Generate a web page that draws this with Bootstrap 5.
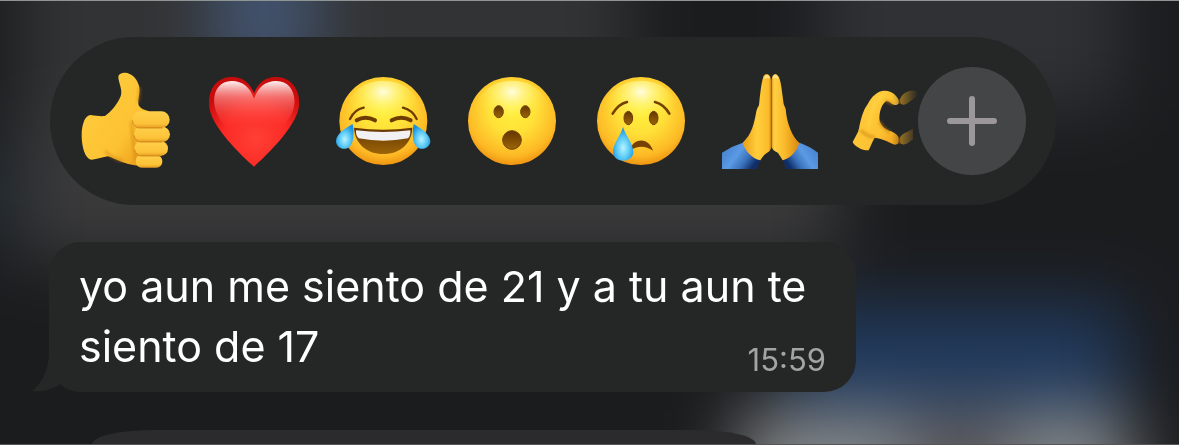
<!DOCTYPE html>
<html lang="es">
<head>
<meta charset="utf-8">
<meta name="viewport" content="width=device-width, initial-scale=1">
<title>Reacciones</title>
<link href="https://cdn.jsdelivr.net/npm/bootstrap@5.3.0/dist/css/bootstrap.min.css" rel="stylesheet">
<style>
  :root { --panel: #252726; }
  body {
    font-family: Inter, "Liberation Sans", sans-serif;
    color: #fff;
    background-color: #1b1c1e;
  }
  .screen {
    border-top: 1px solid #8f9494;
    border-bottom: 1px solid #555657;
    padding: 36px 48px 0 50px;
  }
  .backdrop { inset: 0; z-index: -1; }
  .reactions { background: var(--panel); border-radius: 84px; max-width: 1006px; padding: 30px 30px 30px 27px; }
  .reaction-strip {
    gap: 33px;
    min-width: 0;
    -webkit-mask-image: linear-gradient(to left, #0000 0, #000 26px);
    mask-image: linear-gradient(to left, #0000 0, #000 26px);
  }
  .reaction { flex: 0 0 96px; width: 96px; height: 108px; background: none; }
  .reaction svg { width: 96px; height: 96px; overflow: visible; display: block; }
  .more { flex: 0 0 108px; height: 108px; background: #444547; }
  .bubble {
    background: var(--panel);
    border-radius: 32px;
    max-width: 807px;
    margin: 37px 0 38px -1px;
    padding: 14px 30px 16px;
  }
  .bubble p { font-size: 43px; line-height: 60px; }
  .bubble time { font-size: 31px; line-height: 32px; color: #a3a4a4; }
  .tail { left: -17px; bottom: 0; width: 48px; height: 56px; fill: var(--panel); }
  .menu { background: #2b2b2d; height: 14px; max-width: 664px; margin-left: 42px; border-radius: 64px 64px 0 0 / 14px 14px 0 0; }
</style>
</head>
<body>
<svg width="0" height="0" class="position-absolute" aria-hidden="true">
  <defs>
    <radialGradient id="face" cx=".5" cy=".38" r=".66"><stop offset="0" stop-color="#fff03b"/><stop offset=".4" stop-color="#ffe038"/><stop offset=".78" stop-color="#fdb925"/><stop offset="1" stop-color="#ea870b"/></radialGradient>
    <radialGradient id="shine" cx=".5" cy=".2" r=".55"><stop offset="0" stop-color="#fffde0"/><stop offset=".45" stop-color="#fff780" stop-opacity=".6"/><stop offset="1" stop-color="#ffe62e" stop-opacity="0"/></radialGradient>
    <linearGradient id="skin" x2="1" y2="1"><stop offset="0" stop-color="#ffcf3e"/><stop offset=".65" stop-color="#fdc233"/><stop offset="1" stop-color="#e99514"/></linearGradient>
    <linearGradient id="finger" x2="0" y2="1"><stop offset="0" stop-color="#ffd04a"/><stop offset=".75" stop-color="#fcc238"/><stop offset="1" stop-color="#e59a20"/></linearGradient>
    <linearGradient id="brown" x2="0" y2="1"><stop offset="0" stop-color="#643500"/><stop offset="1" stop-color="#9c6508"/></linearGradient>
    <radialGradient id="tear" cx=".5" cy=".62" r=".6"><stop offset="0" stop-color="#b8f3ff"/><stop offset=".5" stop-color="#5ccbf7"/><stop offset="1" stop-color="#168fdd"/></radialGradient>
    <radialGradient id="red" cx=".52" cy=".68" r=".65"><stop offset="0" stop-color="#ff4035"/><stop offset=".55" stop-color="#fb2a25"/><stop offset="1" stop-color="#c80b0b"/></radialGradient>
    <linearGradient id="gloss" x2="0" y2="1"><stop offset="0" stop-color="#fff" stop-opacity=".95"/><stop offset=".22" stop-color="#ff9b98" stop-opacity=".65"/><stop offset=".6" stop-color="#ff3830" stop-opacity=".2"/><stop offset=".85" stop-color="#ff3830" stop-opacity="0"/></linearGradient>
    <linearGradient id="palmL" x2="1" y2="0"><stop offset="0" stop-color="#e99c16"/><stop offset=".5" stop-color="#ffce3c"/><stop offset=".9" stop-color="#fbbb2b"/><stop offset="1" stop-color="#d58c17"/></linearGradient>
    <linearGradient id="palmR" x1="1" x2="0" y2="0"><stop offset="0" stop-color="#d98810"/><stop offset=".5" stop-color="#f9b829"/><stop offset=".9" stop-color="#ffd044"/><stop offset="1" stop-color="#d99319"/></linearGradient>
    <linearGradient id="sleeveL" x2="1" y2=".5"><stop offset="0" stop-color="#3d79c9"/><stop offset=".5" stop-color="#5b9ae4"/><stop offset=".75" stop-color="#3c73bd"/><stop offset="1" stop-color="#102f68"/></linearGradient>
    <linearGradient id="sleeveR" x1="1" x2="0" y2=".5"><stop offset="0" stop-color="#3d79c9"/><stop offset=".5" stop-color="#5b9ae4"/><stop offset=".75" stop-color="#3c73bd"/><stop offset="1" stop-color="#102f68"/></linearGradient>
    <filter id="soft" x="-20%" y="-20%" width="140%" height="140%"><feGaussianBlur stdDeviation="4"/></filter>
    <filter id="frost" filterUnits="userSpaceOnUse" x="-150" y="-200" width="1480" height="850" color-interpolation-filters="sRGB"><feGaussianBlur stdDeviation="34"/></filter>
  </defs>
</svg>

<svg class="backdrop position-fixed w-100 h-100" viewBox="0 0 1179 445" preserveAspectRatio="none" aria-hidden="true">
  <g filter="url(#frost)">
    <rect x="-150" y="-200" width="1480" height="850" fill="#1b1c1e"/>
    <rect x="20" y="-200" width="610" height="310" fill="#323334"/>
    <rect x="820" y="-200" width="300" height="310" fill="#303134"/>
    <rect x="212" y="-200" width="105" height="290" fill="#42536e"/>
    <rect x="-150" y="150" width="160" height="90" fill="#1c2830"/>
    <rect x="20" y="110" width="820" height="150" fill="#3a3a3b"/>
    <rect x="790" y="305" width="335" height="110" fill="#20395c"/>
    <rect x="740" y="410" width="390" height="240" fill="#858787"/>
    <rect x="910" y="420" width="100" height="230" fill="#5a5455"/>
  </g>
</svg>

<main class="screen min-vh-100 d-flex flex-column overflow-hidden">
  <div class="reactions d-flex w-100" role="toolbar" aria-label="Reacciones">
    <div class="reaction-strip d-flex flex-grow-1 overflow-hidden">
      <button type="button" class="reaction border-0 p-0 d-flex align-items-center" aria-label="Me gusta">
        <svg viewBox="111 69 288 288" aria-hidden="true">
          <path fill="url(#skin)" d="M152 195C168 198 184 199 195 198C212 186 231 166 242 139C249 119 235 97 235 80C237 70 250 67 262 69C281 75 294 91 298 112C301 133 292 150 296 166C302 177 315 180 327 184L324 350C298 348 270 345 246 336C229 330 215 322 204 319C190 321 171 328 155 329C136 328 125 291 125 255C125 224 135 195 152 195Z"/>
          <path fill="none" stroke="#c87b0d" stroke-width="7" opacity=".55" filter="url(#soft)" d="M274 215Q279 270 288 338M196 303Q214 326 249 333M298 112Q299 134 294 157"/>
          <rect x="287" y="315" width="80" height="38" rx="18" fill="url(#finger)"/>
          <rect x="283" y="273" width="101" height="45" rx="22" fill="url(#finger)"/>
          <rect x="282" y="230" width="108" height="46" rx="23" fill="url(#finger)"/>
          <rect x="277" y="184" width="112" height="50" rx="25" fill="url(#finger)"/>
          <path fill="none" stroke="#b8700f" stroke-width="3" stroke-linecap="round" opacity=".6" d="M277 212Q281 233 299 234H366M282 257Q286 275 302 276H366M284 300Q289 317 302 318H360"/>
        </svg>
      </button>
      <button type="button" class="reaction border-0 p-0 d-flex align-items-center" aria-label="Me encanta">
        <svg viewBox="48 69 288 288" aria-hidden="true">
          <path fill="url(#red)" d="M192 350C153 315 89 253 65 198C43 142 67 82 124 81C158 80 181 100 192 130C203 100 226 80 260 81C316 82 344 144 318 199C294 253 231 315 192 350Z"/>
          <path fill="url(#gloss)" d="M192 315C145 275 95 230 78 184C62 137 81 93 125 93C158 93 180 112 192 146C204 112 226 93 259 93C303 93 324 137 308 184C290 230 239 275 192 315Z"/>
        </svg>
      </button>
      <button type="button" class="reaction border-0 p-0 d-flex align-items-center" aria-label="Me divierte">
        <svg viewBox="45 69 288 288" aria-hidden="true">
          <circle cx="190" cy="213" r="132" fill="url(#face)"/>
          <ellipse cx="190" cy="178" rx="108" ry="86" fill="url(#shine)"/>
          <g fill="none" stroke="#6e3b00" stroke-linecap="round">
            <path stroke-width="7" d="M90 207Q104 178 131 173M249 173Q277 180 290 207"/>
            <path stroke-width="12" d="M110 211Q136 196 165 211M215 211Q244 196 272 211"/>
          </g>
          <path fill="url(#brown)" d="M102 233Q190 245 277 233C276 279 241 312 190 312C139 312 104 279 102 233Z"/>
          <path fill="#f1f0f2" d="M108 241Q190 251 271 241Q272 258 264 265Q190 279 116 265Q107 257 108 241Z"/>
          <path fill="url(#tear)" d="M98 222C103 246 102 280 88 291C71 304 48 292 48 273C49 250 79 234 98 222Z"/>
          <path fill="url(#tear)" d="M281 222C276 246 277 280 291 291C308 304 331 292 331 273C329 250 299 234 281 222Z"/>
        </svg>
      </button>
      <button type="button" class="reaction border-0 p-0 d-flex align-items-center" aria-label="Me asombra">
        <svg viewBox="42 69 288 288" aria-hidden="true">
          <circle cx="186" cy="213" r="132" fill="url(#face)"/>
          <ellipse cx="186" cy="178" rx="108" ry="86" fill="url(#shine)"/>
          <g fill="url(#brown)" stroke="#70420a" stroke-width="3">
            <ellipse cx="146" cy="185" rx="14" ry="18"/><ellipse cx="226" cy="185" rx="14" ry="18"/><circle cx="186" cy="270" r="28"/>
          </g>
        </svg>
      </button>
      <button type="button" class="reaction border-0 p-0 d-flex align-items-center" aria-label="Me entristece">
        <svg viewBox="39 69 288 288" aria-hidden="true">
          <circle cx="183" cy="213" r="132" fill="url(#face)"/>
          <ellipse cx="183" cy="178" rx="108" ry="86" fill="url(#shine)"/>
          <path fill="none" stroke="#754100" stroke-width="8" stroke-linecap="round" d="M98 191Q115 162 141 156M225 156Q252 163 268 191"/>
          <g fill="url(#brown)" stroke="#6f3e05" stroke-width="3"><ellipse cx="145" cy="204" rx="13" ry="20"/><ellipse cx="221" cy="204" rx="13" ry="20"/></g>
          <path fill="#774105" d="M149 302C156 264 206 258 219 302Q185 279 149 302Z"/>
          <path fill="url(#tear)" d="M129 231C137 257 160 282 160 306C160 322 147 332 130 332C112 332 99 320 99 305C99 282 122 257 129 231Z"/>
        </svg>
      </button>
      <button type="button" class="reaction border-0 p-0 d-flex align-items-center" aria-label="Gracias">
        <svg viewBox="51 69 288 288" aria-hidden="true">
          <path fill="url(#sleeveL)" d="M51 308Q82 288 117 277L167 330Q160 342 156 357H51Z"/>
          <path fill="url(#sleeveR)" d="M339 308Q312 288 279 277L233 330Q239 342 243 357H339Z"/>
          <path fill="url(#palmL)" d="M176 77Q185 67 194 77Q199 84 199 102V288C198 306 186 306 177 316Q171 323 166 331C141 325 119 301 113 278C141 253 147 222 154 184Q157 173 162 166Q167 110 173 87Z"/>
          <path fill="url(#palmR)" d="M203 77Q211 67 219 77Q225 84 229 110L236 162Q245 178 244 194C249 223 259 255 283 279C276 302 258 325 233 331Q226 319 219 309C208 302 200 300 199 286V102Q199 84 203 77Z"/>
          <path fill="none" stroke="#a8640c" stroke-width="3" d="M199 88V290"/>
          <path fill="#ffe08a" d="M178 80Q185 70 194 80V86Q186 82 178 87ZM203 80Q211 70 219 80V87Q211 82 203 86Z"/>
        </svg>
      </button>
      <button type="button" class="reaction border-0 p-0 d-flex align-items-center" aria-label="Manos en corazón">
        <svg viewBox="48 69 288 288" aria-hidden="true">
          <path fill="url(#skin)" d="M53 276C62 259 70 248 72 235C77 211 84 180 97 164C110 138 128 123 148 122C171 121 187 138 193 153C194 164 181 168 173 163C164 159 160 151 151 155C137 167 131 194 134 213C140 230 151 239 169 244C183 251 192 258 193 271C192 285 180 287 168 280C151 270 137 266 119 263C112 275 107 288 101 301C82 302 59 290 53 276Z"/>
          <path fill="none" stroke="#c77b0b" stroke-width="6" filter="url(#soft)" opacity=".8" d="M76 240Q97 261 119 262M134 213Q137 231 165 246M151 154Q163 151 173 163"/>
          <path fill="none" stroke="#ffd84c" stroke-width="9" stroke-linecap="round" opacity=".65" filter="url(#soft)" d="M144 134Q122 146 113 180Q104 205 102 229"/>
          <path fill="#c99322" d="M194 153C197 134 216 120 240 122L252 126V138C240 140 232 150 222 157C209 169 194 165 194 153ZM193 271C193 255 211 248 222 243L234 236V268L219 279C204 287 193 284 193 271Z"/>
          <path fill="none" stroke="#8f4b0c" stroke-width="5" opacity=".7" d="M193 147V162M193 262V282"/>
        </svg>
      </button>
    </div>
    <button type="button" class="more rounded-circle border-0 p-0 d-flex align-items-center justify-content-center" aria-label="Más reacciones">
      <svg width="52" height="52" viewBox="0 0 52 52" fill="none" stroke="#9b979a" stroke-width="6" stroke-linecap="round" aria-hidden="true"><path d="M26 4V48M4 26H48"/></svg>
    </button>
  </div>

  <article class="bubble position-relative w-100">
    <svg class="tail position-absolute" viewBox="0 0 48 56" aria-hidden="true"><path d="M17 0V14C17 34 11 46 0 55Q14 57 29 48Q37 55 48 56V0Z"/></svg>
    <p class="mb-0 position-relative">
      <span class="d-block">yo aun me siento de 21 y a tu aun te</span>
      <span class="d-flex justify-content-between align-items-end">
        <span>siento de 17</span>
        <time datetime="15:59">15:59</time>
      </span>
    </p>
  </article>

  <div class="menu w-100 mt-auto" role="presentation"></div>
</main>
<script src="https://cdn.jsdelivr.net/npm/bootstrap@5.3.0/dist/js/bootstrap.bundle.min.js"></script>
</body>
</html>
